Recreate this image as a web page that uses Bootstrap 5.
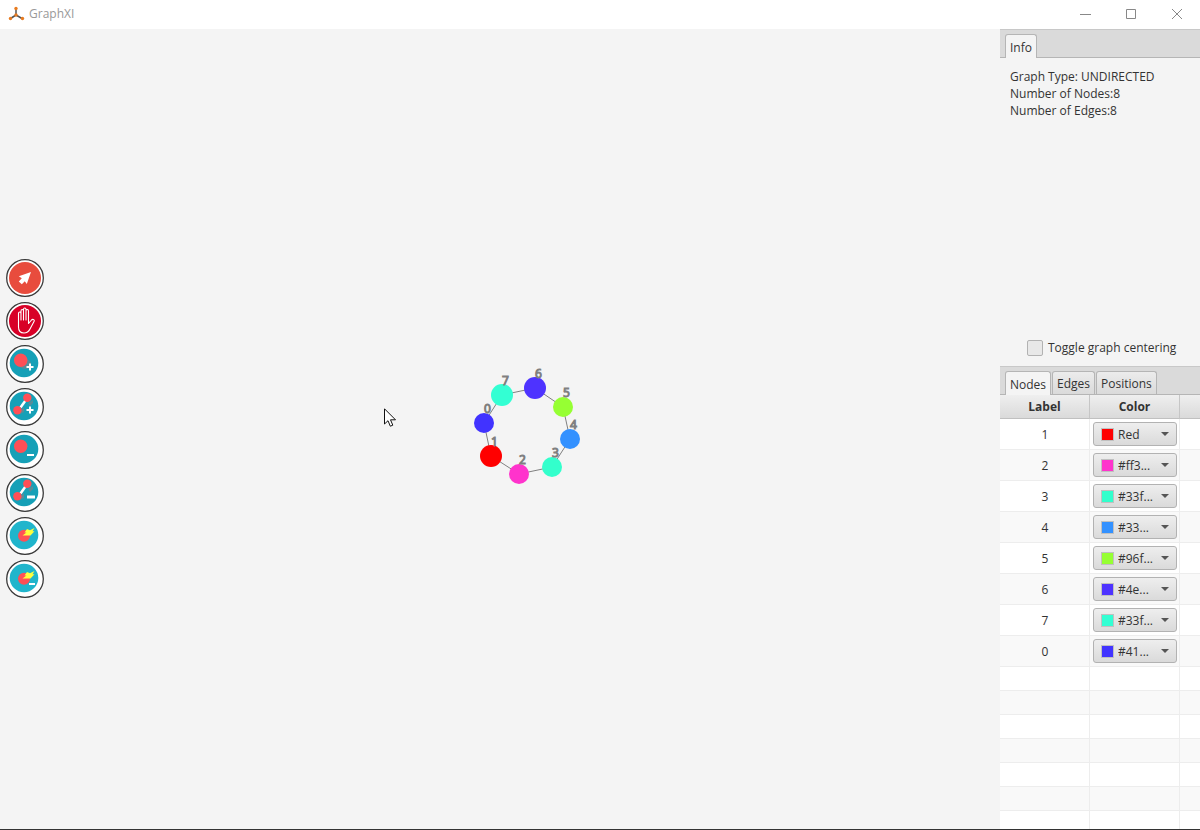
<!DOCTYPE html>
<html lang="en">
<head>
<meta charset="utf-8">
<meta name="viewport" content="width=device-width, initial-scale=1">
<title>GraphXI</title>
<link href="https://cdn.jsdelivr.net/npm/bootstrap@5.3.0/dist/css/bootstrap.min.css" rel="stylesheet">
<style>
  body { font: 12px/17px "Open Sans", "Noto Sans", sans-serif; color: #333; background: #f4f4f4; }
  .title-bar { height: 29px; padding-bottom: 2px; color: #999; }
  .win-btn { width: 46px; color: #888; }
  .status-edge { height: 1px; background: #333; }
  .graph-canvas { min-width: 0; }
  .graph-svg text { font: 12px "Open Sans", sans-serif; fill: #808080; stroke: #808080; stroke-width: 1px; }
  .pointer { left: 384px; top: 379px; }
  .tool-rail { gap: 5px; left: 6px; padding-bottom: 1px; }
  .tool-btn { width: 38px; height: 38px; }
  .side-panel { width: 200px; display: grid; grid-template-rows: 337fr 463fr; }
  .pane { min-height: 0; }
  .tab-strip { height: 29px; flex: none; padding: 4px 5px 0; gap: 1px; background: #dadada; border: solid #b5b5b5; border-top-color: #c8c8c8; border-width: 1px 0; }
  .tab-strip .nav-link { font-size: 12px; line-height: 17px; height: 23px; padding: 3px 4px 2px; margin: 0; color: #333; border: 1px solid #b5b5b5; border-bottom: 0; border-radius: 3px 3px 0 0; background: linear-gradient(#ececec, #dadada); }
  .tab-strip .nav-link.active { background: #f4f4f4; color: #333; height: 24px; border-color: #b5b5b5; }
  .info-text { padding: 10px 10px 0; }
  .center-toggle { gap: 5px; padding: 0 27px 10px; }
  .center-toggle .form-check-input { width: 16px; height: 16px; margin: 0; border: 1px solid #b2b2b2; border-radius: 2px; background-color: #e8e8e8; }
  .node-table { width: 100%; table-layout: fixed; margin: 0; border-collapse: separate; border-spacing: 0; background: #fff; text-align: center; }
  .node-table col.fixed { width: 90px; }
  .node-table th { height: 24px; padding: 0; font-weight: bold; background: linear-gradient(#efefef, #dadada); border-right: 1px solid #c6c6c6; border-bottom: 1px solid #c0c0c0; }
  .node-table td { height: 31px; padding: 0 2px 0 3px; border-right: 1px solid #ededed; border-bottom: 1px solid #ededed; }
  .node-table .blank-row td { height: 24px; }
  .node-table tbody tr:nth-child(even) { background: #f9f9f9; }
  .color-pick { height: 24px; padding-left: 7px; border: 1px solid #b2b2b2; border-radius: 3px; background: linear-gradient(#eeeeee, #dadada); }
  .swatch { width: 13px; height: 13px; flex: none; border: 1px solid #c0c0c0; }
  .color-pick select { min-width: 0; height: 22px; padding: 1px 20px 0 4px; border: 0; appearance: none; font: inherit; color: #333; background: transparent url("data:image/svg+xml,%3Csvg xmlns='http://www.w3.org/2000/svg' width='8' height='4'%3E%3Cpath d='M0 0h8L4 4z' fill='%23555'/%3E%3C/svg%3E") no-repeat right 7px center; }
</style>
</head>
<body class="vh-100 d-flex flex-column overflow-hidden">
<header class="title-bar bg-white d-flex align-items-stretch flex-shrink-0">
  <div class="d-flex align-items-center ps-2 gap-1 me-auto">
    <svg width="17" height="16" viewBox="0 0 17 16"><path d="M8 9V2M8 9L2.500 12.500M8 9L14 12.500" stroke="#555" stroke-width="1.500"/><g fill="#e87b20"><circle cx="8" cy="2.500" r="1.700"/><circle cx="8" cy="9" r="1.700"/><circle cx="2.500" cy="12.500" r="1.700"/><circle cx="14.500" cy="12.500" r="1.700"/></g></svg>
    <span>GraphXI</span>
  </div>
  <button class="win-btn btn p-0 border-0 rounded-0 d-flex align-items-center justify-content-center" aria-label="Minimize"><svg width="12" height="12"><path d="M1 6.500h11" stroke="#888"/></svg></button>
  <button class="win-btn btn p-0 border-0 rounded-0 d-flex align-items-center justify-content-center" aria-label="Maximize"><svg width="12" height="12"><path d="M1.500 1.500h9v9h-9z" fill="none" stroke="#888"/></svg></button>
  <button class="win-btn btn p-0 border-0 rounded-0 d-flex align-items-center justify-content-center" aria-label="Close"><svg width="12" height="12"><path d="M1 1l10 10M11 1L1 11" stroke="#888"/></svg></button>
</header>

<main class="d-flex flex-grow-1 overflow-hidden">
  <section class="graph-canvas position-relative flex-grow-1">
    <svg class="graph-svg w-100 h-100 d-block" id="graph" role="img" aria-label="Graph with eight nodes"></svg>
    <svg class="pointer position-absolute" width="13" height="20" viewBox="0 0 13 20"><path d="M.5.800V16l3.500-3.300 2.300 5.500 2.500-1-2.300-5.400h5z" fill="#fff" stroke="#111"/></svg>
    <nav class="tool-rail position-absolute top-0 h-100 d-flex flex-column justify-content-center" aria-label="Tools" id="tools"></nav>
  </section>

  <aside class="side-panel flex-shrink-0">
    <section class="pane d-flex flex-column">
      <div class="tab-strip nav nav-tabs flex-nowrap" role="tablist">
        <button class="nav-link active" role="tab">Info</button>
      </div>
      <div class="info-text">
        <div>Graph Type: UNDIRECTED</div>
        <div>Number of Nodes:8</div>
        <div>Number of Edges:8</div>
      </div>
      <div class="center-toggle d-flex align-items-center mt-auto text-nowrap">
        <input class="form-check-input flex-shrink-0" type="checkbox" id="centering">
        <label for="centering">Toggle graph centering</label>
      </div>
    </section>
    <section class="pane d-flex flex-column overflow-hidden bg-white">
      <div class="tab-strip nav nav-tabs flex-nowrap" role="tablist">
        <button class="nav-link active" role="tab">Nodes</button>
        <button class="nav-link" role="tab">Edges</button>
        <button class="nav-link" role="tab">Positions</button>
      </div>
      <table class="node-table">
        <colgroup><col class="fixed"><col class="fixed"><col></colgroup>
        <thead><tr><th scope="col">Label</th><th scope="col">Color</th><th></th></tr></thead>
        <tbody id="rows"></tbody>
      </table>
    </section>
  </aside>
</main>
<footer class="status-edge flex-shrink-0"></footer>

<script src="https://cdn.jsdelivr.net/npm/bootstrap@5.3.0/dist/js/bootstrap.bundle.min.js"></script>
<script>
  // Nodes in ring order: label, x, y, radius, colour, picker text
  const nodes = [
    [1, 491, 427, 11, '#ff0000', 'Red'],
    [2, 519, 445, 10, '#ff33cc', '#ff3...'],
    [3, 552, 438, 10, '#33ffcc', '#33f...'],
    [4, 570, 410, 10, '#3391ff', '#33...'],
    [5, 563, 378, 10, '#96ff33', '#96f...'],
    [6, 535, 359, 11, '#4e33ff', '#4e...'],
    [7, 502, 366, 11, '#33ffd3', '#33f...'],
    [0, 484, 394, 10, '#4133ff', '#41...']
  ];
  let edges = '', dots = '', labels = '', rows = '';
  nodes.forEach(([id, x, y, r, color, name], i) => {
    const [, nx, ny] = nodes[(i + 1) % nodes.length];
    edges += `<line x1="${x}" y1="${y}" x2="${nx}" y2="${ny}" stroke="#808080"/>`;
    dots += `<circle cx="${x}" cy="${y}" r="${r}" fill="${color}"/>`;
    labels += `<text x="${x}" y="${y - 10}">${id}</text>`;
    rows += `<tr><td>${id}</td><td><div class="color-pick d-flex align-items-center"><span class="swatch" style="background:${color}"></span><select class="flex-grow-1" aria-label="Color of node ${id}"><option>${name}</option></select></div></td><td></td></tr>`;
  });
  document.getElementById('graph').innerHTML = edges + dots + labels;
  document.getElementById('rows').innerHTML = rows + '<tr class="blank-row"><td></td><td></td><td></td></tr>'.repeat(8);

  const teal = '<circle cx="18" cy="18" r="14.300" fill="#16a0b7"/>';
  const aqua = '<circle cx="18" cy="18" r="14.300" fill="#20b5cc"/>';
  const shade = '<ellipse cx="19" cy="19" rx="6" ry="5" fill="#5a8c98"/>';
  const blob = '<circle cx="14.700" cy="15.200" r="6.700" fill="#ff4f56"/>';
  const link = '<path d="M22 15l5-3v3l-3 3zM14 26l4-2v-5l-4 4z" fill="#5a8c98"/><path d="M19.500 12.500L14.500 19.500" stroke="#fff" stroke-width="2.500"/><g fill="#ff4f56"><circle cx="21.300" cy="9.800" r="4.200"/><circle cx="11.400" cy="22.300" r="4.200"/></g>';
  const plus = '<path d="M20.500 22h7M24 18.500v7" stroke="#fff" stroke-width="2"/>';
  const bolt = '<circle cx="18" cy="18.700" r="6" fill="#ff4f56"/><path d="M21 12L24 13.200 28.500 11 26.500 14.300H28.500L24.500 18.500H16.500L20.500 15.500H18.500z" fill="#ffff3d"/>';
  const tools = [
    ['Select', '<circle cx="19" cy="19" r="16" fill="#e84c3d"/><path d="M25 13L12.800 17.200 15.800 19.300 12.800 22.500 15.800 25.300 18.800 22.200 20.800 25z" fill="#fff"/>'],
    ['Pan', '<circle cx="19" cy="19" r="16" fill="#d80027"/><path d="M12.500 20V11.500c0-2 2.500-2 2.500 0V18 9c0-2 2.500-2 2.500 0v9V7.500c0-2 2.500-2 2.500 0V18 9c0-2 2.500-2 2.500 0v12.500l3-3.500c1.500-1.500 3.500 0 2.500 1.500L24 27c-1.500 3-3 4-6 4-4 0-5.500-2.500-5.500-6z" fill="none" stroke="#fff" stroke-width="1.100" stroke-linejoin="round"/>'],
    ['Add node', teal + shade + blob + plus],
    ['Add edge', teal + link + plus],
    ['Remove node', teal + blob + '<path d="M21 24h7" stroke="#fff" stroke-width="2"/>'],
    ['Remove edge', teal + link + '<path d="M21 23h8" stroke="#fff" stroke-width="3"/>'],
    ['Quick add', aqua + bolt],
    ['Quick remove', aqua + bolt + '<path d="M23 24h6" stroke="#fff" stroke-width="2"/>']
  ];
  document.getElementById('tools').innerHTML = tools.map(([name, art]) =>
    `<button class="tool-btn btn p-0 border-0 rounded-circle d-flex" aria-label="${name}"><svg width="38" height="38" viewBox="0 0 38 38"><circle cx="19" cy="19" r="18.300" fill="#fff" stroke="#3a3a3a" stroke-width="1.300"/>${art}</svg></button>`).join('');
</script>
</body>
</html>
